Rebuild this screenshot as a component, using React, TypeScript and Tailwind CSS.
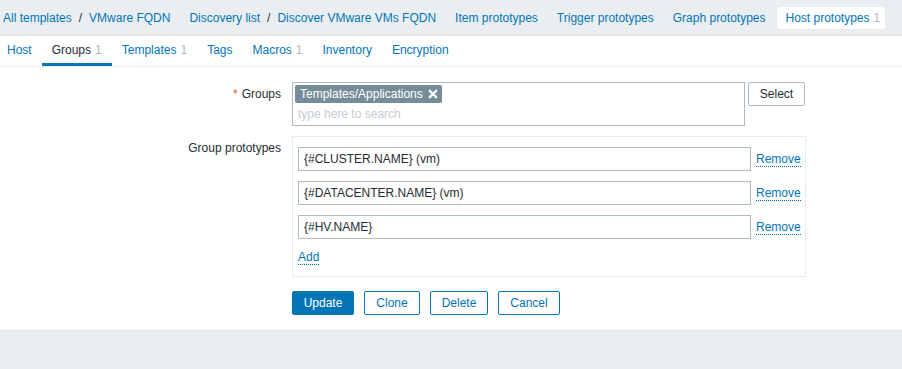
import React from 'react';

const blue = 'text-[#0275b8]';

const Breadcrumbs: React.FC = () => (
  <div className="h-[36px] bg-[#ebeef0] border-b border-[#dfe4e7] flex items-center pl-[3px] gap-[19px] text-[12px]">
    <div className="flex items-center">
      <span className={blue}>All templates</span>
      <span className="mx-[7px] text-[#1f2c33]">/</span>
      <span className={blue}>VMware FQDN</span>
    </div>
    <div className="flex items-center">
      <span className={blue}>Discovery list</span>
      <span className="mx-[7px] text-[#1f2c33]">/</span>
      <span className={blue}>Discover VMware VMs FQDN</span>
    </div>
    <span className={blue}>Item prototypes</span>
    <span className={blue}>Trigger prototypes</span>
    <span className={blue}>Graph prototypes</span>
    <span className="-ml-[7px] h-[22px] pl-[8px] pr-[5px] flex items-center bg-white rounded-[2px] shadow-[0_0_1px_rgba(0,0,0,0.15)]">
      <span className={blue}>Host prototypes</span>
      <span className="ml-[4px] text-[#acbbc2]">1</span>
    </span>
  </div>
);

const tabs: { name: string; count?: number }[] = [
  { name: 'Host' },
  { name: 'Groups', count: 1 },
  { name: 'Templates', count: 1 },
  { name: 'Tags' },
  { name: 'Macros', count: 1 },
  { name: 'Inventory' },
  { name: 'Encryption' },
];

const Tabs: React.FC = () => (
  <div className="h-[31px] border-b border-[#ebeef0] flex -ml-[3px] text-[12px]">
    {tabs.map((t) => {
      const active = t.name === 'Groups';
      return (
        <div
          key={t.name}
          className={`px-[10px] flex items-center border-b-[3px] ${
            active ? 'border-[#0275b8] text-[#1f2c33]' : 'border-transparent text-[#0275b8]'
          }`}
        >
          <span>{t.name}</span>
          {t.count !== undefined && <span className="ml-[4px] text-[#acbbc2]">{t.count}</span>}
        </div>
      );
    })}
  </div>
);

const ProtoRow: React.FC<{ value: string }> = ({ value }) => (
  <div className="flex items-center">
    <div className="w-[453px] h-[24px] border border-[#acbbc2] flex items-center px-[5px] text-[#1f2c33]">
      {value}
    </div>
    <span className="ml-[5px] text-[#0275b8] border-b border-dotted border-[#0275b8] leading-[14px]">Remove</span>
  </div>
);

const Btn: React.FC<{ label: string; width: string; primary?: boolean }> = ({ label, width, primary }) => (
  <button
    className={`h-[24px] ${width} rounded-[2px] border text-[12px] ${
      primary ? 'bg-[#0275b8] border-[#0275b8] text-white' : 'bg-white border-[#0275b8] text-[#0275b8]'
    }`}
  >
    {label}
  </button>
);

const App: React.FC = () => {
  return (
    <div className="w-[902px] h-[369px] bg-[#ebeef0] text-[12px] text-[#1f2c33] overflow-hidden" style={{ fontFamily: '"Liberation Sans", Arial, sans-serif' }}>
      <Breadcrumbs />
      <div className="bg-white border-b border-[#dfe4e7]">
        <Tabs />
        <div className="pt-[15px] pb-[15px]">
          {/* Groups */}
          <div className="flex">
            <div className="w-[292px] pr-[11px] text-right pt-[3px]">
              <span className="text-[#e54d2e] mr-[4px]">*</span>Groups
            </div>
            <div className="w-[453px] h-[44px] border border-[#acbbc2] p-[2px]">
              <div className="inline-flex items-center h-[18px] bg-[#768d99] text-white rounded-[2px] pl-[5px] pr-[4px]">
                Templates/Applications
                <svg className="ml-[5px]" width="10" height="10" viewBox="0 0 10 10">
                  <path d="M2 2 L8 8 M8 2 L2 8" stroke="white" strokeWidth="2.4" strokeLinecap="square" />
                </svg>
              </div>
              <div className="pl-[3px] pt-[2px] text-[#c5cdd2]">type here to search</div>
            </div>
            <div className="ml-[3px]">
              <button className="h-[24px] w-[57px] border border-[#acbbc2] rounded-[2px] bg-white text-[#1f2c33] text-[12px]">
                Select
              </button>
            </div>
          </div>

          {/* Group prototypes */}
          <div className="flex mt-[10px]">
            <div className="w-[292px] pr-[11px] text-right pt-[3px]">Group prototypes</div>
            <div className="w-[514px] border border-[#ebebeb] pl-[5px] pt-[10px] pb-[10px] flex flex-col gap-[10px]">
              <ProtoRow value="{#CLUSTER.NAME} (vm)" />
              <ProtoRow value="{#DATACENTER.NAME} (vm)" />
              <ProtoRow value="{#HV.NAME}" />
              <div className="-mt-[1px]">
                <span className="text-[#0275b8] border-b border-dotted border-[#0275b8] leading-[14px] inline-block">Add</span>
              </div>
            </div>
          </div>

          {/* Buttons */}
          <div className="flex mt-[14px] pl-[292px] gap-[10px]">
            <Btn label="Update" width="w-[62px]" primary />
            <Btn label="Clone" width="w-[56px]" />
            <Btn label="Delete" width="w-[58px]" />
            <Btn label="Cancel" width="w-[62px]" />
          </div>
        </div>
      </div>
    </div>
  );
};

export default App;
